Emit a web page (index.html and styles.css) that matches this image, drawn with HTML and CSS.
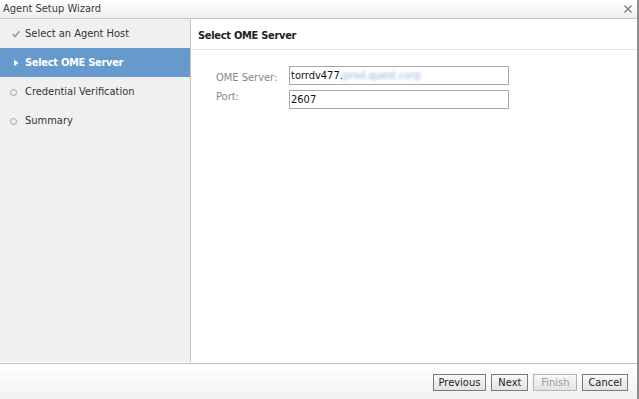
FILE: index.html
```html
<!DOCTYPE html>
<html>
<head>
<meta charset="utf-8">
<title>Agent Setup Wizard</title>
<link rel="stylesheet" href="styles.css">
</head>
<body>
<div class="window">
  <div class="titlebar">
    <span class="title">Agent Setup Wizard</span>
    <svg class="close" width="8" height="8" viewBox="0 0 8 8"><path d="M0.5 0.5L7.5 7.5M7.5 0.5L0.5 7.5" stroke="#7a7a7a" stroke-width="1.3" fill="none"/></svg>
  </div>
  <div class="main">
    <ul class="steps">
      <li class="step done">
        <svg class="icon" width="9" height="8" viewBox="0 0 9 8"><path d="M1.2 4.2L3.4 6.4L8 1.2" stroke="#a0a0a0" stroke-width="1.7" fill="none"/></svg>
        <span>Select an Agent Host</span>
      </li>
      <li class="step active">
        <svg class="icon" width="9" height="8" viewBox="0 0 9 8"><path d="M2.5 0.8L7 4L2.5 7.2Z" fill="#ffffff"/></svg>
        <span>Select OME Server</span>
      </li>
      <li class="step">
        <span class="icon dot"></span>
        <span>Credential Verification</span>
      </li>
      <li class="step">
        <span class="icon dot"></span>
        <span>Summary</span>
      </li>
    </ul>
    <div class="panel">
      <div class="panel-header">Select OME Server</div>
      <div class="form">
        <label class="label label-first">OME Server:</label>
        <div class="field">torrdv477.<span class="blurred">prod.quest.corp</span></div>
        <label class="label">Port:</label>
        <div class="field">2607</div>
      </div>
    </div>
  </div>
  <div class="footer">
    <button class="btn">Previous</button>
    <button class="btn">Next</button>
    <button class="btn disabled">Finish</button>
    <button class="btn">Cancel</button>
  </div>
</div>
</body>
</html>
```

FILE: styles.css
```css
* { box-sizing: border-box; }
html, body {
  margin: 0;
  padding: 0;
  width: 639px;
  height: 399px;
  overflow: hidden;
  background: #ffffff;
}
body {
  font-family: "DejaVu Sans Condensed", "Liberation Sans", sans-serif;
  font-size: 11px;
  color: #333333;
}
.window {
  width: 639px;
  height: 399px;
  display: flex;
  flex-direction: column;
  border-right: 2px solid #8e8e8e;
  background: #ffffff;
}
.titlebar {
  height: 19px;
  flex: none;
  display: flex;
  align-items: center;
  justify-content: space-between;
  padding: 0 5px 1px 3px;
  background: linear-gradient(#ffffff, #eeeeee);
  border-bottom: 1px solid #c6c6c6;
  color: #3a3a3a;
  font-size: 11px;
}
.close { display: block; margin-top: 1px; }
.main {
  flex: 1;
  display: flex;
  min-height: 0;
  margin-bottom: 1px;
}
.steps {
  list-style: none;
  margin: 0;
  padding: 0;
  width: 191px;
  flex: none;
  background: #f0f0f0;
  border-right: 1px solid #c4c4c4;
}
.step {
  height: 29px;
  display: flex;
  align-items: center;
  padding-left: 7px;
  color: #333333;
}
.step .icon {
  width: 18px;
  flex: none;
  display: block;
}
.step.active {
  background: #6699cc;
  color: #ffffff;
  font-weight: bold;
  letter-spacing: -0.3px;
}
.dot {
  position: relative;
  height: 5px;
}
.dot::before {
  content: "";
  position: absolute;
  left: 3px;
  top: 0;
  width: 5px;
  height: 5px;
  border: 1px solid #a0a0a0;
  border-radius: 50%;
}
.panel {
  flex: 1;
  display: flex;
  flex-direction: column;
}
.panel-header {
  height: 31px;
  flex: none;
  display: flex;
  align-items: center;
  padding: 2px 0 0 7px;
  font-weight: bold;
  letter-spacing: -0.3px;
  color: #222222;
  border-bottom: 1px solid #e2e2e2;
}
.form {
  display: grid;
  grid-template-columns: 73px 220px;
  row-gap: 5px;
  padding: 16px 0 0 25px;
}
.label {
  color: #858585;
  padding-top: 0;
  line-height: 13px;
}
.label-first { padding-top: 5px; }
.field {
  height: 19px;
  border: 1px solid #a8a8a8;
  background: #ffffff;
  color: #111111;
  padding: 0 1px;
  line-height: 17px;
  white-space: nowrap;
  overflow: hidden;
}
.blurred {
  color: #8fb2de;
  filter: blur(1.4px);
}
.footer {
  height: 36px;
  flex: none;
  display: flex;
  justify-content: flex-end;
  align-items: flex-start;
  gap: 5px;
  padding: 10px 9px 0 0;
  border-top: 1px solid #c2c2c2;
  background: linear-gradient(#ffffff, #f1f1f1);
}
.btn {
  height: 17px;
  min-width: 37px;
  padding: 0 5px;
  font-family: inherit;
  font-size: 11px;
  color: #222222;
  background: linear-gradient(#f8f8f8, #e3e3e3);
  border: 1px solid #7a7a7a;
  border-radius: 0;
  line-height: 15px;
}
.btn.disabled {
  color: #9a9a9a;
  border-color: #b4b4b4;
  padding: 0 7px;
}
```
